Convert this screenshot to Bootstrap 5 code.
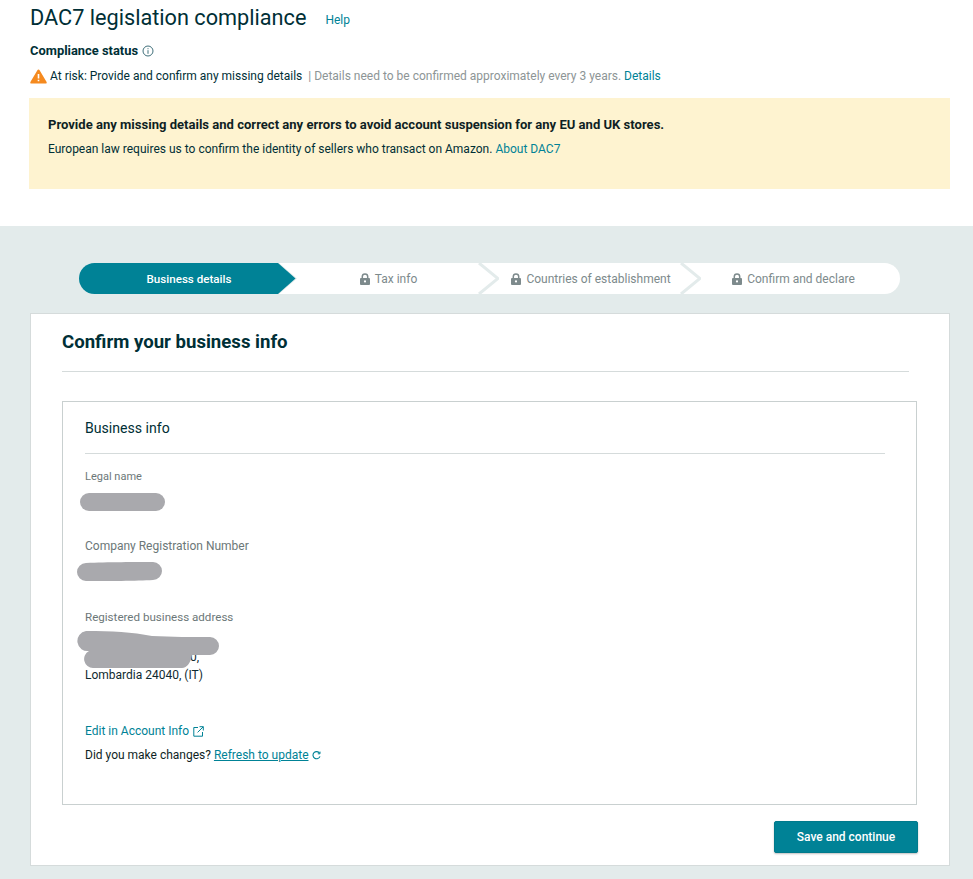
<!DOCTYPE html>
<html lang="en">
<head>
    <meta charset="UTF-8">
    <meta name="viewport" content="width=device-width, initial-scale=1.0">
    <title>DAC7 legislation compliance</title>
    <link href="https://cdn.jsdelivr.net/npm/bootstrap@5.3.0/dist/css/bootstrap.min.css" rel="stylesheet">
    <style>
        body { font-family: Roboto, "Liberation Sans", sans-serif; font-size: 12px; line-height: 18px; color: #0f1111; background: #fff; }
        a { color: #008296; text-decoration: none; }
        .top-area { height: 226px; padding: 0 23px 0 29px; }
        .page-title { font-size: 21.7px; line-height: 36px; font-weight: 400; color: #002f36; margin: 0; padding-left: 1px; }
        .title-row { height: 36px; gap: 19px; }
        .help-link { font-size: 12px; padding-top: 11px; }
        .status-label { font-weight: 700; color: #002f36; font-size: 12.9px; margin-top: 6px; height: 18px; padding-left: 1px; }
        .status-row { margin-top: 7px; height: 18px; padding-left: 1px; gap: 3px; color: #002f36; }
        .muted-text { color: #8d9596; margin-left: 3px; }
        .warn-box { background: #fef3d0; height: 91px; margin-top: 13px; padding: 18px 19px; color: #002f36; }
        .warn-box b { display: block; font-size: 13.05px; color: #0f1f24; }
        .warn-box p { margin: 6px 0 0; font-size: 12px; }
        .lower-area { background: #e3ebeb; padding: 37px 23px 13px 30px; height: 653px; }
        .stepper { margin: 0 50px 0 49px; height: 31px; background: #fff; border-radius: 16px; overflow: hidden; }
        .step-item { position: relative; height: 31px; display: flex; align-items: center; justify-content: center; gap: 5px; color: #7d8a8c; }
        .step-one { width: 217px; color: #fff; font-size: 11.6px; font-weight: 500; padding-left: 3px; }
        .step-two { width: 203px; padding-right: 18px; }
        .step-three { width: 202px; padding-right: 18px; }
        .step-four { width: 199px; padding-right: 14px; }
        .step-arrow { position: absolute; top: 0; left: 0; }
        .step-label { position: relative; white-space: nowrap; }
        .lock-icon { position: relative; flex: none; }
        .main-panel { background: #fff; border: 1px solid #d5dbdb; margin-top: 19px; height: 553px; padding: 0 32px 0 31px; }
        .panel-title { font-size: 18.6px; line-height: 22px; font-weight: 700; color: #002f36; margin: 0; padding-top: 17px; height: 57px; }
        .panel-rule { border-bottom: 1px solid #d5dbdb; margin-right: 8px; }
        .info-box { border: 1px solid #c9d0d0; height: 404px; margin-top: 29px; padding: 0 31px 0 22px; }
        .info-head { font-size: 14.1px; font-weight: 400; color: #002f36; border-bottom: 1px solid #d5dbdb; height: 52px; padding-top: 18px; margin: 0; }
        .field-label { color: #6c7778; font-size: 11px; }
        .field-one { margin-top: 14px; }
        .field-label.second { margin-top: 26px; font-size: 12px; }
        .field-label.third { margin-top: 27px; font-size: 11.6px; }
        .scribble { display: block; }
        .legal-blob { margin: 7px 0 0 -5px; }
        .company-blob { margin: 7px 0 0 -8px; }
        .address-block { position: relative; height: 53px; margin-top: 5px; padding-top: 17px; color: #0f2a30; }
        .address-block .scribble { position: absolute; top: 0; left: -8px; z-index: 1; }
        .address-tail { padding-left: 105px; height: 18px; }
        .edit-line { margin-top: 38px; }
        .edit-line svg { margin-left: 4px; }
        .refresh-line { margin-top: 6px; color: #0f1f24; }
        .refresh-line a { text-decoration: underline; }
        .refresh-line svg { margin-left: 3px; }
        .save-btn { background: #008296; color: #fff; border: 1px solid #007a8c; border-radius: 2px; width: 144px; height: 32px; font-size: 12px; font-weight: 500; padding: 0; box-shadow: 0 1px 2px rgba(0,0,0,.25); }
        .save-btn:hover { background: #007386; color: #fff; }
        .btn-row { margin-top: 16px; margin-right: -1px; }
    </style>
</head>
<body>
    <div class="top-area">
        <div class="d-flex title-row align-items-start">
            <h1 class="page-title">DAC7 legislation compliance</h1>
            <a class="help-link" href="#">Help</a>
        </div>
        <div class="status-label d-flex align-items-center gap-1">
            Compliance status
            <svg width="12" height="12" viewBox="0 0 12 12" fill="none" stroke="#3f6f7a" stroke-width="1"><circle cx="6" cy="6" r="5"/><path d="M6 5.2v3.6M6 3.2v1"/></svg>
        </div>
        <div class="status-row d-flex align-items-center">
            <svg width="17" height="15" viewBox="0 0 17 15"><path d="M8.5.6c.5 0 .9.3 1.1.7l7 11.6c.4.8-.1 1.7-1 1.7H1.4c-.9 0-1.4-.9-1-1.7l7-11.6c.2-.4.6-.7 1.1-.7z" fill="#f58a1f"/><path d="M8.5 5v4.6M8.5 10.8v1.4" stroke="#fff" stroke-width="1.6"/></svg>
            <span>At risk: Provide and confirm any missing details</span>
            <span class="muted-text">| Details need to be confirmed approximately every 3 years.</span>
            <a href="#">Details</a>
        </div>
        <div class="warn-box">
            <b>Provide any missing details and correct any errors to avoid account suspension for any EU and UK stores.</b>
            <p>European law requires us to confirm the identity of sellers who transact on Amazon. <a href="#">About DAC7</a></p>
        </div>
    </div>

    <div class="lower-area">
        <div class="stepper d-flex">
            <div class="step-item step-one">
                <svg class="step-arrow" width="218" height="31" viewBox="0 0 218 31"><path d="M0 0H200L218 15.5 200 31H0Z" fill="#e3ebeb"/><path d="M0 0H199L216.5 15.5 199 31H0Z" fill="#008296"/></svg>
                <span class="step-label">Business details</span>
            </div>
            <div class="step-item step-two">
                <svg class="step-arrow" width="203" height="31" viewBox="0 0 203 31"><path d="M183 0L202 15.5 183 31" fill="none" stroke="#e3ebeb" stroke-width="3"/></svg>
                <svg class="lock-icon" width="10" height="12" viewBox="0 0 10 12"><path d="M2.3 5.5V3.6a2.7 2.7 0 0 1 5.4 0v1.9" fill="none" stroke="#7d8a8c" stroke-width="1.5"/><rect y="5" width="10" height="7" rx="1" fill="#7d8a8c"/><circle cx="5" cy="8.4" r="1.1" fill="#fff"/></svg>
                <span class="step-label">Tax info</span>
            </div>
            <div class="step-item step-three">
                <svg class="step-arrow" width="202" height="31" viewBox="0 0 202 31"><path d="M182 0L201 15.5 182 31" fill="none" stroke="#e3ebeb" stroke-width="3"/></svg>
                <svg class="lock-icon" width="10" height="12" viewBox="0 0 10 12"><path d="M2.3 5.5V3.6a2.7 2.7 0 0 1 5.4 0v1.9" fill="none" stroke="#7d8a8c" stroke-width="1.5"/><rect y="5" width="10" height="7" rx="1" fill="#7d8a8c"/><circle cx="5" cy="8.4" r="1.1" fill="#fff"/></svg>
                <span class="step-label">Countries of establishment</span>
            </div>
            <div class="step-item step-four">
                <svg class="lock-icon" width="10" height="12" viewBox="0 0 10 12"><path d="M2.3 5.5V3.6a2.7 2.7 0 0 1 5.4 0v1.9" fill="none" stroke="#7d8a8c" stroke-width="1.5"/><rect y="5" width="10" height="7" rx="1" fill="#7d8a8c"/><circle cx="5" cy="8.4" r="1.1" fill="#fff"/></svg>
                <span class="step-label">Confirm and declare</span>
            </div>
        </div>

        <div class="main-panel">
            <h2 class="panel-title">Confirm your business info</h2>
            <div class="panel-rule"></div>
            <div class="info-box">
                <h3 class="info-head">Business info</h3>
                <div class="field-label field-one">Legal name</div>
                <svg class="scribble legal-blob" width="86" height="18" viewBox="0 0 86 18"><rect width="85" height="18" rx="9" fill="#a9a9ad"/></svg>
                <div class="field-label second">Company Registration Number</div>
                <svg class="scribble company-blob" width="86" height="19" viewBox="0 0 86 19"><path d="M9 1C30 0 60 0 76 0a9 9 0 0 1 0 18C60 19 30 19 9 19A9 9 0 0 1 9 1z" fill="#a9a9ad"/></svg>
                <div class="field-label third">Registered business address</div>
                <div class="address-block">
                    <svg class="scribble" width="143" height="37" viewBox="0 0 143 37"><path d="M9 0C35 0 55 1 75 5c20 1 40 1 58 1a9 9 0 0 1 0 18c-10 0-16 0-18 0-1 7-5 13-10 13H16a9 9 0 0 1-4-17 9 9 0 0 1-3-20z" fill="#a9a9ad"/></svg>
                    <div class="address-tail">0,</div>
                    <div>Lombardia 24040, (IT)</div>
                </div>
                <div class="edit-line"><a href="#">Edit in Account Info</a><svg width="11" height="11" viewBox="0 0 11 11" fill="none" stroke="#008296" stroke-width="1"><path d="M5 1.5H.8v8.7h8.7V6M6.5.7h3.8v3.8M10.2.8L4.6 6.4"/></svg></div>
                <div class="refresh-line">Did you make changes? <a href="#">Refresh to update</a><svg width="9" height="9" viewBox="0 0 9 9" fill="none" stroke="#008296" stroke-width="1.1"><path d="M7.6 2.2A3.6 3.6 0 1 0 8 5.4"/><path d="M8 .6v2.2H5.8" stroke-width="1"/></svg></div>
            </div>
            <div class="btn-row d-flex justify-content-end">
                <button type="button" class="btn save-btn">Save and continue</button>
            </div>
        </div>
    </div>

    <script src="https://cdn.jsdelivr.net/npm/bootstrap@5.3.0/dist/js/bootstrap.bundle.min.js"></script>
</body>
</html>
